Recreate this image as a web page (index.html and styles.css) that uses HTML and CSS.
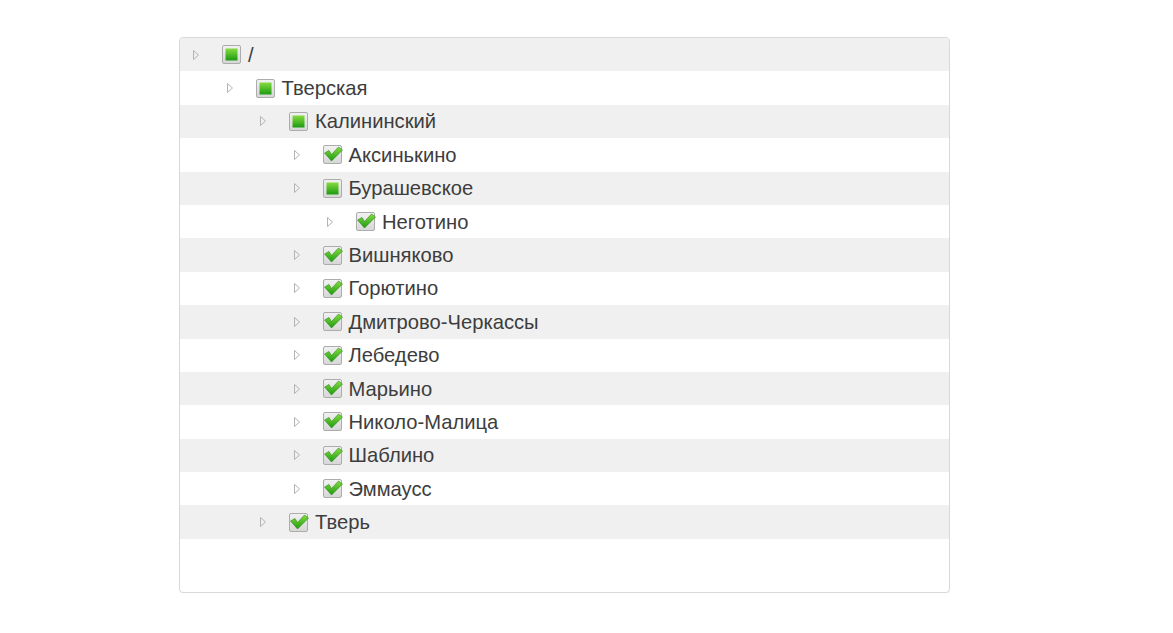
FILE: index.html
```html
<!DOCTYPE html>
<html>
<head>
<meta charset="utf-8">
<link rel="stylesheet" href="styles.css">
</head>
<body>
<svg width="0" height="0" class="defs">
  <defs>
    <linearGradient id="boxg" x1="0" y1="0" x2="0" y2="1">
      <stop offset="0" stop-color="#f2f2f2"/>
      <stop offset="1" stop-color="#d6d6d6"/>
    </linearGradient>
    <linearGradient id="greeng" x1="0" y1="0" x2="0" y2="1">
      <stop offset="0" stop-color="#86dc40"/>
      <stop offset="1" stop-color="#1c9a10"/>
    </linearGradient>
    <symbol id="tri" viewBox="0 0 8 12">
      <path d="M1.5 1.5 L6.5 6 L1.5 10.5 Z" fill="none" stroke="#b3b3b3" stroke-width="1"/>
    </symbol>
    <symbol id="cb-full" viewBox="0 0 20 20">
      <rect x="0.5" y="1.5" width="18" height="18" rx="1.5" fill="url(#boxg)" stroke="#acacac"/>
      <path d="M1.5 9 L6 6.5 L8.5 10.5 L15.5 3 L19.5 6 L8.5 17 Z" fill="url(#greeng)" stroke="#2c8a1b" stroke-width="0.6"/>
    </symbol>
    <symbol id="cb-part" viewBox="0 0 20 20">
      <rect x="0.5" y="1.5" width="18" height="18" rx="1.5" fill="url(#boxg)" stroke="#acacac"/>
      <rect x="3.5" y="4.5" width="12" height="12" fill="url(#greeng)"/>
    </symbol>
  </defs>
</svg>
<div class="tree">
  <div class="row odd l0"><svg class="tri"><use href="#tri"/></svg><svg class="cb"><use href="#cb-part"/></svg><span class="label">/</span></div>
  <div class="row l1"><svg class="tri"><use href="#tri"/></svg><svg class="cb"><use href="#cb-part"/></svg><span class="label">Тверская</span></div>
  <div class="row odd l2"><svg class="tri"><use href="#tri"/></svg><svg class="cb"><use href="#cb-part"/></svg><span class="label">Калининский</span></div>
  <div class="row l3"><svg class="tri"><use href="#tri"/></svg><svg class="cb"><use href="#cb-full"/></svg><span class="label">Аксинькино</span></div>
  <div class="row odd l3"><svg class="tri"><use href="#tri"/></svg><svg class="cb"><use href="#cb-part"/></svg><span class="label">Бурашевское</span></div>
  <div class="row l4"><svg class="tri"><use href="#tri"/></svg><svg class="cb"><use href="#cb-full"/></svg><span class="label">Неготино</span></div>
  <div class="row odd l3"><svg class="tri"><use href="#tri"/></svg><svg class="cb"><use href="#cb-full"/></svg><span class="label">Вишняково</span></div>
  <div class="row l3"><svg class="tri"><use href="#tri"/></svg><svg class="cb"><use href="#cb-full"/></svg><span class="label">Горютино</span></div>
  <div class="row odd l3"><svg class="tri"><use href="#tri"/></svg><svg class="cb"><use href="#cb-full"/></svg><span class="label">Дмитрово-Черкассы</span></div>
  <div class="row l3"><svg class="tri"><use href="#tri"/></svg><svg class="cb"><use href="#cb-full"/></svg><span class="label">Лебедево</span></div>
  <div class="row odd l3"><svg class="tri"><use href="#tri"/></svg><svg class="cb"><use href="#cb-full"/></svg><span class="label">Марьино</span></div>
  <div class="row l3"><svg class="tri"><use href="#tri"/></svg><svg class="cb"><use href="#cb-full"/></svg><span class="label">Николо-Малица</span></div>
  <div class="row odd l3"><svg class="tri"><use href="#tri"/></svg><svg class="cb"><use href="#cb-full"/></svg><span class="label">Шаблино</span></div>
  <div class="row l3"><svg class="tri"><use href="#tri"/></svg><svg class="cb"><use href="#cb-full"/></svg><span class="label">Эммаусс</span></div>
  <div class="row odd l2"><svg class="tri"><use href="#tri"/></svg><svg class="cb"><use href="#cb-full"/></svg><span class="label">Тверь</span></div>
</div>
</body>
</html>
```
FILE: styles.css
```css
html, body {
  margin: 0;
  padding: 0;
  background: #fff;
}
body {
  font-family: "Liberation Sans", Arial, sans-serif;
  color: #3d3d3d;
}
.defs {
  position: absolute;
  width: 0;
  height: 0;
}
.tree {
  margin: 37px 0 0 179px;
  width: 769px;
  height: 554px;
  border: 1px solid #d9d9d9;
  border-radius: 4px;
  box-shadow: 0 1px 1px rgba(0,0,0,0.06);
  overflow: hidden;
}
.row {
  height: 33.4px;
  display: flex;
  align-items: center;
  box-sizing: border-box;
}
.row.odd {
  background: #f0f0f0;
}
.l0 { padding-left: 12px; }
.l1 { padding-left: 45.5px; }
.l2 { padding-left: 79px; }
.l3 { padding-left: 112.5px; }
.l4 { padding-left: 146px; }
.tri {
  width: 8px;
  height: 12px;
  flex: none;
}
.cb {
  width: 20px;
  height: 20px;
  margin-left: 22px;
  margin-top: -1px;
  flex: none;
}
.label {
  margin-left: 6px;
  font-size: 20.2px;
  line-height: 22px;
}
```
